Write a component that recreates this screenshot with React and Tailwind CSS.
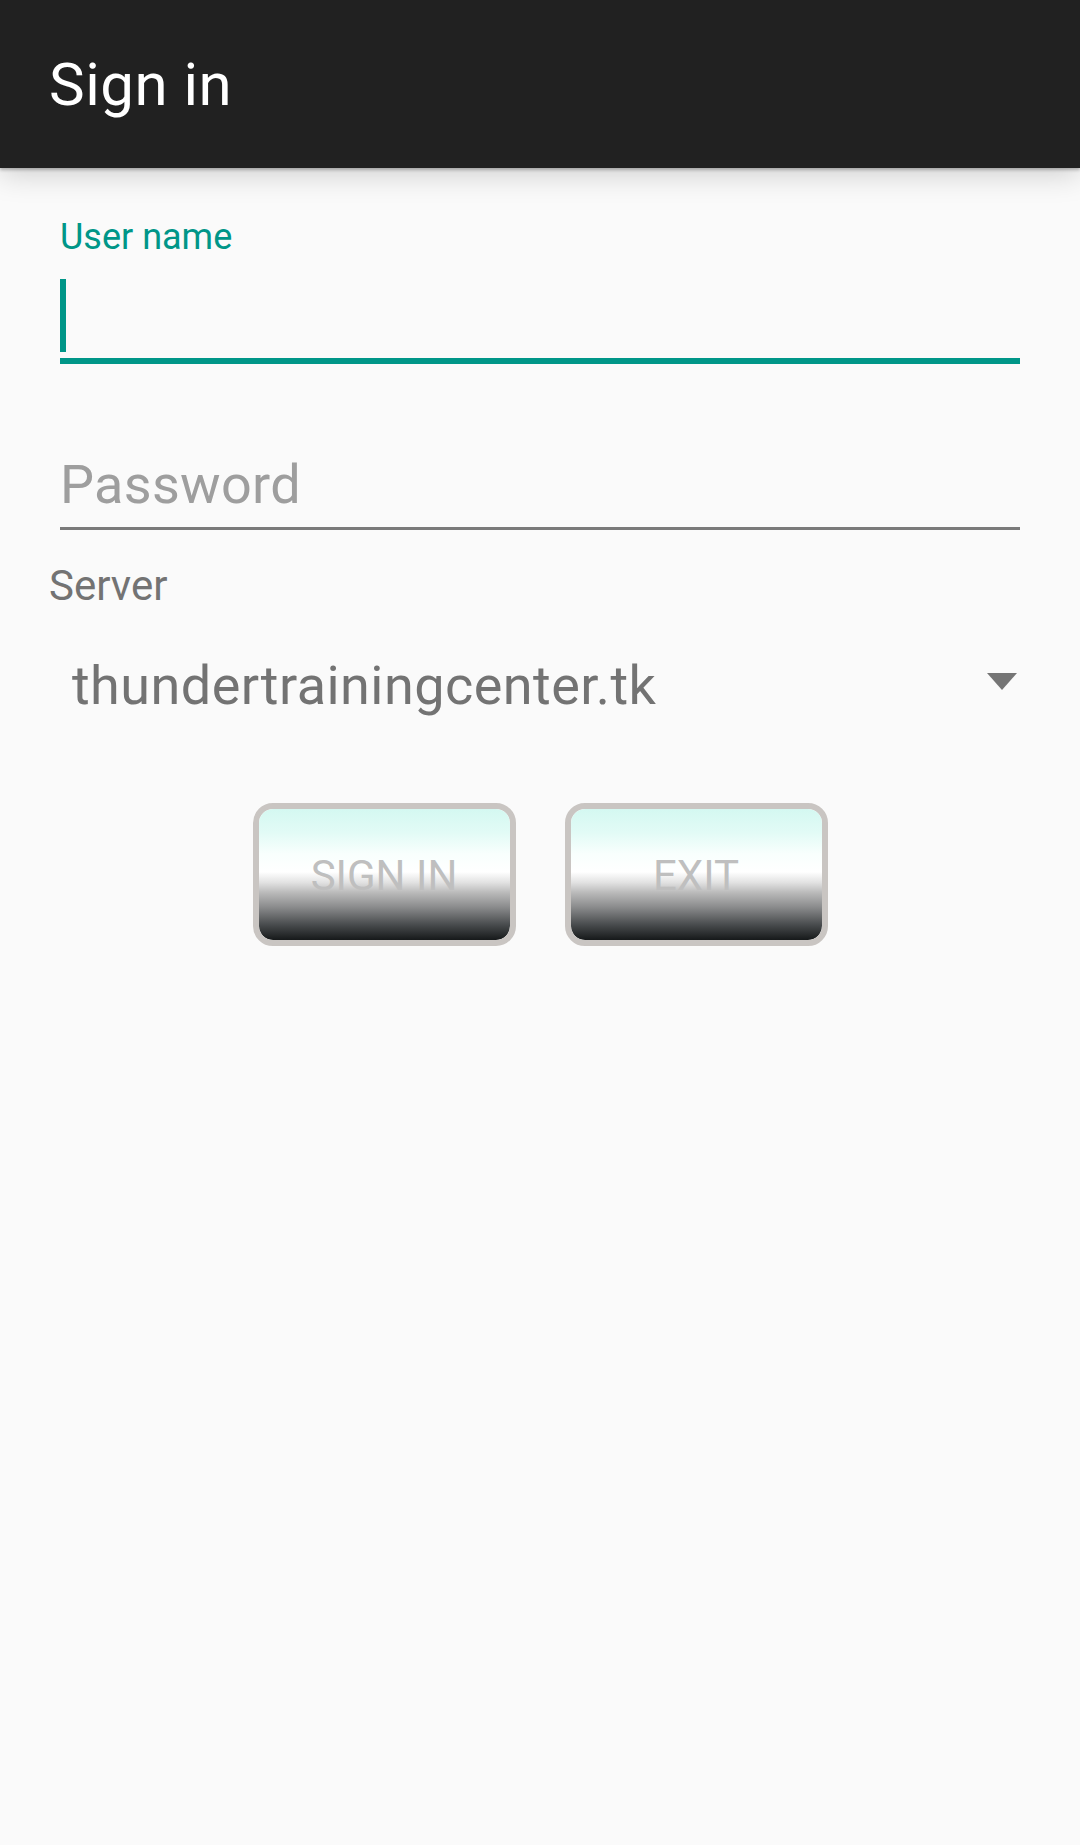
import { useState } from 'react'

const Triangle = () => (
  <svg width="30" height="17" viewBox="0 0 30 17" className="block">
    <polygon points="0,0 30,0 15,17" fill="#757575" />
  </svg>
)

const GlossButton = ({ children }) => (
  <button
    type="button"
    className="w-[263px] h-[143px] rounded-[20px] border-[6px] border-[#c9c5c2] overflow-hidden p-0"
  >
    <div className="h-full w-full rounded-[14px] bg-[linear-gradient(to_bottom,#d4f8f1_0%,#e2fbf6_18%,#f8fffd_34%,#ffffff_48%,#e2e2e2_56%,#b9b9b9_64%,#8a8b8c_75%,#4a4d4f_88%,#16191a_100%)] flex items-center justify-center pt-[3px]">
      <span className="text-[42px] leading-[42px] text-[#bfbfbf]">
        {children}
      </span>
    </div>
  </button>
)

export default function App() {
  const [server] = useState('thundertrainingcenter.tk')

  return (
    <div className="min-h-[1845px] bg-[#fafafa] font-['Roboto',sans-serif]">
      {/* toolbar */}
      <header className="relative z-10 h-[168px] bg-[#212121] pl-[49px] pt-[55px] shadow-[0_2px_3px_rgba(0,0,0,0.25),0_6px_28px_rgba(0,0,0,0.18)]">
        <h1 className="text-[60px] leading-[60px] tracking-[0.5px] text-white">Sign in</h1>
      </header>

      {/* user name */}
      <div className="px-[60px] pt-[51px]">
        <label className="block text-[36px] leading-[36px] text-[#009688]">
          User name
        </label>
        <div className="mt-[24px] h-[73px]">
          <div className="w-[6px] h-full bg-[#009688]" />
        </div>
        <div className="mt-[6px] h-[6px] bg-[#009688]" />
      </div>

      {/* password */}
      <div className="px-[60px] pt-[94px]">
        <div className="text-[54px] leading-[54px] tracking-[0.3px] text-[#9e9e9e]">Password</div>
        <div className="mt-[15px] h-[3px] bg-[#7a7a7a]" />
      </div>

      {/* server */}
      <div className="pl-[49px] pt-[35px]">
        <div className="text-[42px] leading-[42px] text-[#737373]">Server</div>
      </div>

      <div className="pl-[72px] pr-[63px] pt-[52px] flex items-start justify-between">
        <div className="text-[54px] leading-[54px] tracking-[0.45px] text-[#737373]">{server}</div>
        <div className="mt-[14px]">
          <Triangle />
        </div>
      </div>

      {/* buttons */}
      <div className="mt-[90px] flex justify-center gap-[49px]">
        <GlossButton>SIGN IN</GlossButton>
        <GlossButton>EXIT</GlossButton>
      </div>
    </div>
  )
}
